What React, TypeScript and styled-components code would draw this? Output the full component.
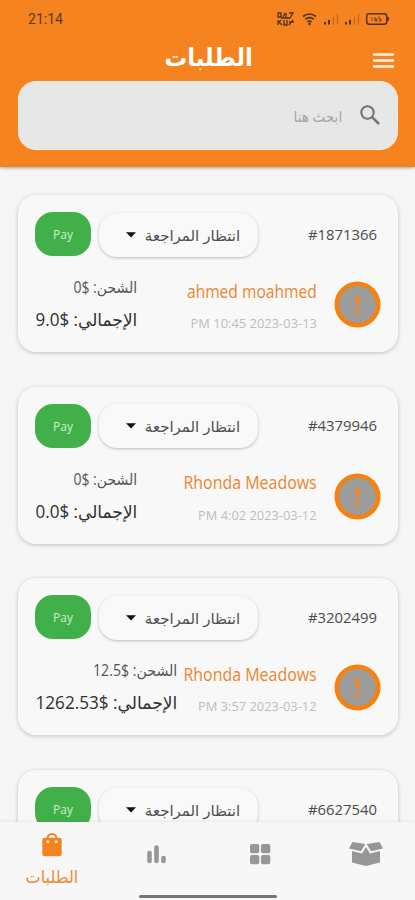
import React, { useLayoutEffect, useRef, useState } from "react";
import styled, { createGlobalStyle } from "styled-components";

const ORANGE = "#f58420";

const GlobalStyle = createGlobalStyle`
  * { box-sizing: border-box; }
  body { margin: 0; background: #f5f5f5; }
`;

const Screen = styled.div`
  width: 415px;
  height: 900px;
  overflow: hidden;
  display: flex;
  flex-direction: column;
  background: #f6f6f6;
  font-family: "Open Sans", "DejaVu Sans", sans-serif;
`;

/* Header */
const Header = styled.header`
  flex: none;
  height: 167px;
  background: ${ORANGE};
  box-shadow: 0 1px 3px rgba(0, 0, 0, 0.35);
  z-index: 1;
`;
const StatusBar = styled.div`
  height: 38px;
  padding: 0 26px 0 28px;
  display: flex;
  align-items: center;
  justify-content: space-between;
  color: #5b3a1c;
`;
const TitleRow = styled.div`
  height: 43px;
  padding: 0 21px 0 23px;
  display: grid;
  grid-template-columns: 1fr 88px 1fr;
  align-items: center;
  justify-items: end;
`;
const TitleCell = styled.h1`
  grid-column: 2;
  margin: -7px 0 0;
  display: flex;
  color: #fff;
`;
const MenuIcon = styled.svg`
  display: block;
  margin-top: 1px;
`;
const SearchBox = styled.div`
  height: 69px;
  margin: 0 17px 0 18px;
  padding: 0 17px;
  border-radius: 18px;
  border: 1px solid #fdeedd;
  background: #e7e7e7;
  display: flex;
  align-items: center;
  justify-content: flex-end;
  gap: 18px;
`;
const SearchIcon = styled.svg`
  margin-top: -1px;
`;

/* Orders */
const OrderList = styled.main`
  flex: 1;
  min-height: 0;
  overflow: hidden;
  padding: 28px 17px 0 18px;
  display: flex;
  flex-direction: column;
  gap: 34.7px;
`;
const Card = styled.article`
  flex: none;
  height: 157px;
  padding: 17px 17px 0 17px;
  border-radius: 18px;
  background: #f8f8f8;
  box-shadow: 0 1px 4px rgba(0, 0, 0, 0.22);
`;
const CardTop = styled.div`
  height: 44px;
  display: flex;
  align-items: center;
`;
const PayButton = styled.button`
  width: 56px;
  height: 44px;
  padding: 1px 0 0;
  border: 0;
  border-radius: 18px;
  background: #41b049;
  display: flex;
  align-items: center;
  justify-content: center;
  font-family: inherit;
`;
const StatusSelect = styled.div`
  width: 159px;
  height: 44px;
  margin: 1px 0 0 8px;
  padding: 0 18px 0 27px;
  border-radius: 18px;
  background: #f9f9f9;
  box-shadow: 0 1px 3px rgba(0, 0, 0, 0.24);
  display: flex;
  align-items: center;
  justify-content: space-between;
`;
const OrderNumber = styled.div`
  margin: 0 4px 0 auto;
  display: flex;
`;
const CardBody = styled.div`
  margin-top: 20px;
  display: flex;
`;
const Amounts = styled.div`
  display: flex;
  flex-direction: column;
  align-items: flex-end;
  gap: 6px;
  margin-top: -2px;
`;
const Customer = styled.div`
  margin-left: auto;
  display: flex;
  flex-direction: column;
  align-items: flex-end;
  gap: 8px;
  padding-top: 2px;
`;
const Avatar = styled.svg`
  flex: none;
  margin: 5px 0 0 17px;
`;

/* Bottom navigation */
const BottomNav = styled.nav`
  flex: none;
  height: 78px;
  background: #f7f7f7;
  box-shadow: 0 -1px 3px rgba(0, 0, 0, 0.08);
  z-index: 1;
`;
const Tabs = styled.div`
  height: 72px;
  display: grid;
  grid-template-columns: 104px 104px 104px 108px;
`;
const Tab = styled.div<{ $active?: boolean }>`
  display: flex;
  flex-direction: column;
  align-items: center;
  padding-top: ${(p) => (p.$active ? 11 : 18)}px;
  gap: 7px;
  color: ${(p) => (p.$active ? ORANGE : "#979797")};
`;
const HomeBar = styled.div`
  width: 138px;
  height: 3px;
  margin: 1px auto 0;
  border-radius: 2px;
  background: #777;
`;

const Line = styled.span<{ $w: number; $h: number }>`
  display: flex;
  justify-content: center;
  align-items: center;
  width: ${(p) => p.$w}px;
  height: ${(p) => p.$h}px;
`;
const Glyphs = styled.span<{ $size: number; $weight: number; $color: string; $family?: string }>`
  flex: none;
  white-space: nowrap;
  font-size: ${(p) => p.$size}px;
  font-weight: ${(p) => p.$weight};
  color: ${(p) => p.$color};
  ${(p) => (p.$family ? `font-family: ${p.$family};` : "")}
`;

interface FitProps {
  text: string;
  width: number;
  size: number;
  height?: number;
  weight?: number;
  color?: string;
  rtl?: boolean;
  family?: string;
}

/** A single line of text condensed or widened to fill its measure. */
function Fit({ text, width, size, height = 22, weight = 400, color = "currentColor", rtl, family }: FitProps) {
  const ref = useRef<HTMLSpanElement>(null);
  const [scale, setScale] = useState(1);
  useLayoutEffect(() => {
    const natural = ref.current?.offsetWidth;
    if (natural) setScale(width / natural);
  }, [text, width, size]);
  return (
    <Line $w={width} $h={height}>
      <Glyphs
        ref={ref}
        dir={rtl ? "rtl" : "ltr"}
        $size={size}
        $weight={weight}
        $color={color}
        $family={family}
        style={{ transform: `scaleX(${scale})` }}
      >
        {text}
      </Glyphs>
    </Line>
  );
}

/** Keeps the currency sign to the right of its number inside Arabic text. */
const isolate = (amount: string) => `\u2066${amount}\u2069`;

interface OrderDetails {
  customer: string;
  customerWidth: number;
  date: string;
  dateWidth: number;
  shipping: string;
  shippingWidth: number;
  total: string;
  totalWidth: number;
}
interface Order {
  id: string;
  details?: OrderDetails;
}

const orders: Order[] = [
  { id: "#1871366", details: { customer: "ahmed moahmed", customerWidth: 130, date: "PM 10:45 2023-03-13", dateWidth: 126, shipping: "0$", shippingWidth: 64, total: "9.0$", totalWidth: 102 } },
  { id: "#4379946", details: { customer: "Rhonda Meadows", customerWidth: 133, date: "PM 4:02 2023-03-12", dateWidth: 119, shipping: "0$", shippingWidth: 64, total: "0.0$", totalWidth: 102 } },
  { id: "#3202499", details: { customer: "Rhonda Meadows", customerWidth: 133, date: "PM 3:57 2023-03-12", dateWidth: 119, shipping: "12.5$", shippingWidth: 84, total: "1262.53$", totalWidth: 142 } },
  { id: "#6627540" },
];

function Details({ details: d }: { details: OrderDetails }) {
  return (
    <CardBody>
      <Amounts>
        <Fit text={`الشحن: ${isolate(d.shipping)}`} width={d.shippingWidth} size={15.5} height={26} color="#555" rtl />
        <Fit text={`الإجمالي: ${isolate(d.total)}`} width={d.totalWidth} size={17.5} height={26} color="#303030" rtl />
      </Amounts>
      <Customer>
        <Fit text={d.customer} width={d.customerWidth} size={17.5} height={25} color="#ec8530" />
        <Fit text={d.date} width={d.dateWidth} size={12} height={25} color="#bdbdbd" />
      </Customer>
      <Avatar width="47" height="47" viewBox="0 0 47 47">
        <circle cx="23.5" cy="23.5" r="20.7" fill="#9c9c9c" stroke="#f5820f" strokeWidth="4.6" />
        <path d="M21.200 14.500h4.600l-.6 11h-3.400z" fill="#ee8a2a" />
        <circle cx="23.5" cy="31" r="2.2" fill="#ee8a2a" />
      </Avatar>
    </CardBody>
  );
}

function OrderCard({ order }: { order: Order }) {
  return (
    <Card>
      <CardTop>
        <PayButton>
          <Fit text="Pay" width={20} size={12} color="#c9efcb" />
        </PayButton>
        <StatusSelect>
          <svg width="10" height="6" viewBox="0 0 10 6"><path d="M0 .3h10L5 5.500z" fill="#111" /></svg>
          <Fit text="انتظار المراجعة" width={95} size={15} height={24} color="#505050" rtl />
        </StatusSelect>
        <OrderNumber>
          <Fit text={order.id} width={69} size={14} color="#4b4b4b" />
        </OrderNumber>
      </CardTop>
      {order.details && <Details details={order.details} />}
    </Card>
  );
}

function StatusIcons() {
  return (
    <svg width="112" height="16" viewBox="277 11 112 16" fill="none" stroke="#4d321d">
      <g strokeWidth="1.3">
        <path d="M278 13h3v4h-3zM283 17l2-4M286 13v5M289 13h4l-3 5M278 20v5m3-5l-2 2 3 3M284 20v5h3v-5M289 22h5M289 25l4-5M281 18h9" />
      </g>
      <g strokeWidth="1.7">
        <path d="M303 16.500q6.500-5 13 0M305.300 19.200q4.200-3.200 8.400 0M307.500 21.800q2-1.500 4 0" />
        <circle cx="309.5" cy="24" r=".5" />
      </g>
      <path d="M325 22v2.500M329 20v4.500M346 22v2.500M350 20v4.500" strokeWidth="2" />
      <path d="M333.500 17v7.500M337.500 14v10.500M354.500 17v7.500M358.500 14v10.500" strokeWidth="1.4" opacity=".3" />
      <rect x="366.7" y="13.7" width="20" height="10.6" rx="2.5" strokeWidth="1.4" />
      <path d="M388 17v4" strokeWidth="1.8" />
      <path d="M372 17.500v3.500M375 17v4h2v-2h-2M380 17h-1v2h2v2h-2" strokeWidth="1" opacity=".8" />
    </svg>
  );
}

export default function App() {
  return (
    <Screen>
      <GlobalStyle />
      <Header>
        <StatusBar>
          <Fit text="21:14" width={35} size={14} family="Roboto, sans-serif" />
          <StatusIcons />
        </StatusBar>
        <TitleRow>
          <TitleCell>
            <Fit text="الطلبات" width={88} size={24.5} height={30} weight={700} rtl />
          </TitleCell>
          <MenuIcon width="21" height="15" viewBox="0 0 21 15">
            <path d="M0 1.500h21M0 7.500h21M0 13.500h21" stroke="#fff0df" strokeWidth="2.500" />
          </MenuIcon>
        </TitleRow>
        <SearchBox>
          <Fit text="ابحث هنا" width={49} size={15} color="#a5a5a5" rtl />
          <SearchIcon width="20" height="20" viewBox="0 0 20 20" fill="none" stroke="#747474">
            <circle cx="7.5" cy="7.5" r="6.2" strokeWidth="2.1" />
            <path d="M12 12l7 7" strokeWidth="2.5" />
          </SearchIcon>
        </SearchBox>
      </Header>
      <OrderList>
        {orders.map((o) => <OrderCard key={o.id} order={o} />)}
      </OrderList>
      <BottomNav>
        <Tabs>
          <Tab $active>
            <svg width="20" height="25" viewBox="0 0 20 25">
              <path d="M5.500 8V5.500a4.500 4.500 0 0 1 9 0v2.500" fill="none" stroke="currentColor" strokeWidth="2" />
              <rect x=".3" y="4.8" width="19.4" height="18.5" rx="2.2" fill="currentColor" />
              <circle cx="5.8" cy="8.7" r="1.5" fill="#fff3e4" />
              <circle cx="14.2" cy="8.7" r="1.5" fill="#fff3e4" />
            </svg>
            <Fit text="الطلبات" width={53} size={17} color="#ed8b38" rtl />
          </Tab>
          <Tab>
            <svg width="19" height="28" viewBox="0 0 19 28" stroke="currentColor" strokeWidth="4.6" strokeLinecap="round">
              <path d="M2.500 13v8M9.500 7.500v13.500M16.500 18v3" />
            </svg>
          </Tab>
          <Tab>
            <svg width="22" height="28" viewBox="0 0 22 28" fill="currentColor">
              <rect x="1" y="4" width="9.3" height="9.3" rx="2" />
              <rect x="12" y="4" width="9.3" height="9.3" rx="2" />
              <rect x="1" y="15" width="9.3" height="9.3" rx="2" />
              <rect x="12" y="15" width="9.3" height="9.3" rx="2" />
            </svg>
          </Tab>
          <Tab>
            <svg width="34" height="28" viewBox="0 0 34 28" fill="currentColor">
              <path d="M3.500 2L16.300 4 12 11.200 0 8.600zM30.500 2L17.700 4 22 11.200 34 8.600z" />
              <path d="M3 11l10 2.500 4-6.500 4 6.500L31 11v11.500L17 26 3 22.500z" />
            </svg>
          </Tab>
        </Tabs>
        <HomeBar />
      </BottomNav>
    </Screen>
  );
}
